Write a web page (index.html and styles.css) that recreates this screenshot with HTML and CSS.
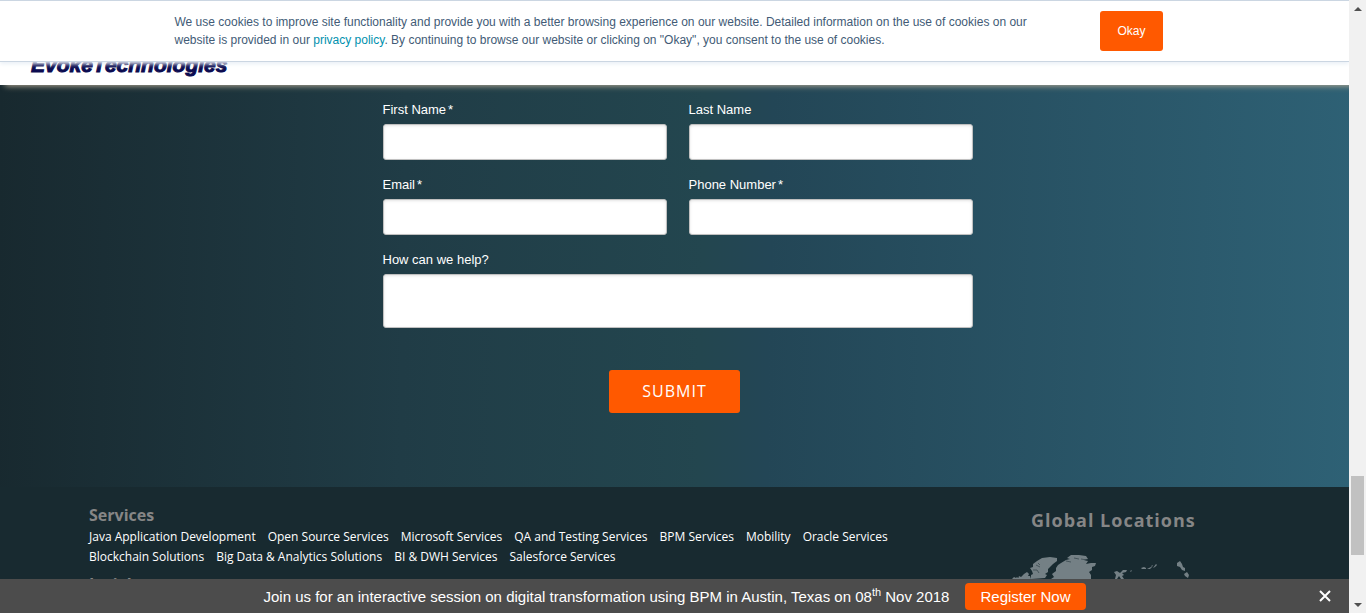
FILE: index.html
```html
<!DOCTYPE html>
<html lang="en">
<head>
<meta charset="utf-8">
<title>Evoke Technologies</title>
<link rel="stylesheet" href="styles.css">
</head>
<body>
<div class="page">
  <section class="cookie" aria-label="Cookie notice">
    <p class="cookie-text">We use cookies to improve site functionality and provide you with a better browsing experience on our website. Detailed information on the use of cookies on our website is provided in our <a href="#">privacy policy</a>. By continuing to browse our website or clicking on "Okay", you consent to the use of cookies.</p>
    <button class="cookie-ok" type="button">Okay</button>
  </section>
  <header class="site-header"><a class="logo" href="#">EvokeTechnologies</a></header>
  <main class="contact">
    <form class="form">
      <div class="fields">
        <div class="field">
          <label for="first">First Name<span class="req">*</span></label>
          <input id="first" type="text">
        </div>
        <div class="field">
          <label for="last">Last Name</label>
          <input id="last" type="text">
        </div>
        <div class="field">
          <label for="email">Email<span class="req">*</span></label>
          <input id="email" type="email">
        </div>
        <div class="field">
          <label for="phone">Phone Number<span class="req">*</span></label>
          <input id="phone" type="tel">
        </div>
        <div class="field wide">
          <label for="help">How can we help?</label>
          <textarea id="help"></textarea>
        </div>
      </div>
      <button class="submit" type="submit">SUBMIT</button>
    </form>
  </main>
  <footer class="footer">
    <div class="links">
      <h2>Services</h2>
      <ul>
        <li><a href="#">Java Application Development</a></li>
        <li><a href="#">Open Source Services</a></li>
        <li><a href="#">Microsoft Services</a></li>
        <li><a href="#">QA and Testing Services</a></li>
        <li><a href="#">BPM Services</a></li>
        <li><a href="#">Mobility</a></li>
        <li><a href="#">Oracle Services</a></li>
        <li><a href="#">Blockchain Solutions</a></li>
        <li><a href="#">Big Data &amp; Analytics Solutions</a></li>
        <li><a href="#">BI &amp; DWH Services</a></li>
        <li><a href="#">Salesforce Services</a></li>
      </ul>
      <h2>Insights</h2>
    </div>
    <div class="locations">
      <h2>Global Locations</h2>
      <svg class="map" viewBox="12 0 200 40" width="200" height="40" aria-hidden="true">
        <path d="M12 34l2-2 2 1 1-1 2 2zM18 34l1-3 2 1 3-3 3-2 2 2-1 2 2 0 1 3zM31 34l0-4 2-1-1-3-2-3 3-1 0-3 4-3 5-3 8-1 7 1v3l-4 3-2 2-3 3 0 3-3 2 2 1-2 3z"/>
        <path d="M51 34l3-2-2-3 4-3 0-3 2-3 3-2 5-3 4-1-3-1 4-3 8 0 7 1 2 3-4 1 4 1-2 3 5-1 5 0-1 3-3 1 0 3-3 2 2 3v5z"/>
        <path d="M114 27l3-1 3 2 3-3 4 0-1 2-4 1 2 2-2 1 2 3h-3l-2-3-2 3h-2l1-4zM130 26l2-1-1 2zM141 23l3-1 2 1 0 1-4 0zM147 24l4-2 1 0-2 2zM151 21l2-1-1 2zM153 23l3-4 1 1-2 2zM177 18l3-2 2 3 1 3 2 1 0 3-3-1-2-3-3-1zM184 29l3-2 2 3-1 3-3-2z"/>
        <path class="cut" d="M36 20l4 2M33 25l4 0 2 3M66 16l5 1M74 13l5 1M81 14l6 1M38 18l2 2"/>
      </svg>
    </div>
  </footer>
  <aside class="promo" aria-label="Event">
    <p>Join us for an interactive session on digital transformation using BPM in Austin, Texas on 08<sup>th</sup> Nov 2018</p>
    <a class="register" href="#">Register Now</a>
    <button class="close" type="button" aria-label="Close"><svg viewBox="0 0 12 12" width="12" height="12"><path d="M1 1l10 10M11 1L1 11"/></svg></button>
  </aside>
</div>
<div class="scrollbar" aria-hidden="true">
  <svg viewBox="0 0 17 17" width="17" height="17"><path d="M5 11l4-4 4 4z"/></svg>
  <div class="track"><div class="thumb"></div></div>
  <svg viewBox="0 0 17 17" width="17" height="17"><path d="M5 7h8l-4 4z"/></svg>
</div>
</body>
</html>
```
FILE: styles.css
```css
* { box-sizing: border-box; }
body {
  margin: 0;
  height: 100vh;
  display: flex;
  overflow: hidden;
  font-family: "Liberation Sans", Arial, sans-serif;
}
h2, p, ul { margin: 0; padding: 0; }
a { text-decoration: none; }
button { border: 0; padding: 0; cursor: pointer; }

.page { flex: 1; position: relative; overflow: hidden; }

.cookie {
  position: absolute;
  top: 0;
  left: 0;
  right: 0;
  z-index: 3;
  display: flex;
  justify-content: center;
  align-items: flex-start;
  gap: 56px;
  padding: 10px 12px 10px 0;
  background: #fff;
  border: solid #cbd6e2;
  border-width: 1px 0;
  box-shadow: 0 2px 4px #eaf0f6;
}
.cookie-text {
  width: 870px;
  padding-top: 2px;
  font-size: 12px;
  line-height: 18px;
  color: #425b76;
}
.cookie-text a { color: #0091ae; }
.cookie-ok {
  height: 40px;
  padding: 0 17px;
  border-radius: 3px;
  background: #ff5900;
  color: #fff;
  font: 12px "Liberation Sans", Arial, sans-serif;
}

.site-header {
  position: relative;
  z-index: 1;
  display: flex;
  padding: 53px 31px 8px;
  background: #fff;
  box-shadow: 5px 1px 6px #b5a994;
}
.logo {
  font-size: 21px;
  line-height: 24px;
  font-weight: bold;
  font-style: italic;
  color: #0b0b50;
  -webkit-text-stroke: 1px #0b0b50;
}

.contact {
  padding: 16px 0 74px;
  background: linear-gradient(91deg, #18292f 0%, #203c46 30%, #23464f 52%, #234656 57%, #2e6175 100%);
}
.form {
  display: flex;
  flex-direction: column;
  align-items: center;
  gap: 42px;
}
.fields {
  width: 596px;
  padding-left: 6px;
  display: grid;
  grid-template-columns: 1fr 1fr;
  gap: 16px 22px;
}
.field { display: flex; flex-direction: column; gap: 6px; }
.wide { grid-column: 1 / -1; }
.field label { font-size: 13px; line-height: 17px; color: #fff; }
.req { margin-left: 2px; }
.field input, .field textarea {
  width: 100%;
  height: 36px;
  border: 1px solid #c0c0c0;
  border-radius: 3px;
  background: #fff;
  box-shadow: inset 0 1px 3px #e4e4e4;
  resize: none;
}
.field textarea { height: 54px; }
.submit {
  padding: 0 33px;
  border-radius: 3px;
  background: #ff5900;
  color: #fff;
  font: 500 16px/43px "Open Sans", sans-serif;
  letter-spacing: 1px;
}

.footer {
  display: flex;
  justify-content: space-between;
  padding: 16px 137px 40px 89px;
  background: #182a30;
  font-family: "Open Sans", sans-serif;
}
.footer h2 { color: #868686; font-size: 16px; line-height: 24px; font-weight: 700; }
.links { width: 830px; }
.links ul {
  display: flex;
  flex-wrap: wrap;
  column-gap: 12px;
  padding-bottom: 5px;
  list-style: none;
}
.links a { color: #fff; font-size: 12px; line-height: 20px; display: block; }
.locations { padding-top: 5px; }
.locations h2 { font-size: 18px; letter-spacing: 1px; margin-left: 19px; }
.map { display: block; margin-top: 13px; fill: #748085; }
.map .cut { fill: none; stroke: #182a30; stroke-opacity: .5; }

.promo {
  position: absolute;
  left: 0;
  right: 0;
  bottom: 0;
  z-index: 2;
  height: 34px;
  display: flex;
  align-items: center;
  justify-content: center;
  gap: 16px;
  background: #4c4c4c;
  color: #fff;
  font-size: 15px;
}
.promo sup { font-size: 11px; line-height: 0; }
.register {
  padding: 0 15px;
  line-height: 27px;
  border-radius: 4px;
  background: #ff5900;
  color: #fff;
}
.close { position: absolute; right: 18px; top: 11px; width: 12px; height: 12px; background: none; }
.close svg { display: block; stroke: #fff; stroke-width: 2; }

.scrollbar {
  width: 17px;
  display: flex;
  flex-direction: column;
  background: #f1f1f1;
}
.scrollbar svg { display: block; fill: #505050; }
.track { flex: 1; display: flex; flex-direction: column; justify-content: flex-end; padding: 0 2px 41px; }
.thumb { height: 79px; background: #c1c1c1; }
```
